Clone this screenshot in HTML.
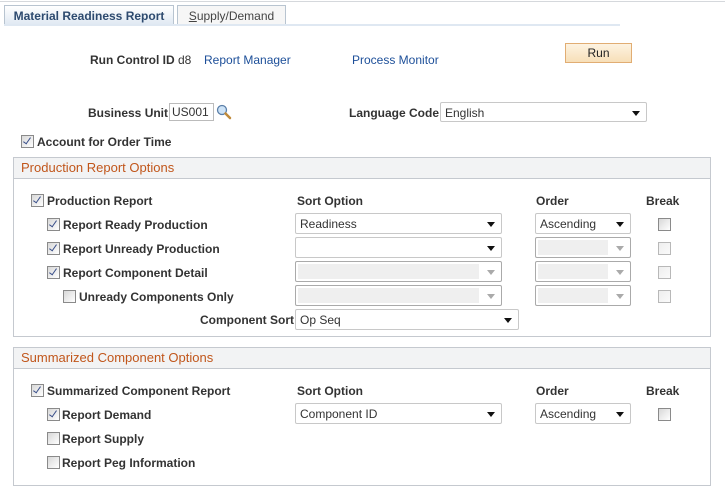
<!DOCTYPE html>
<html><head><style>
body{margin:0;width:725px;height:488px;background:#fff;font-family:"Liberation Sans",Arial,sans-serif;font-size:12px;color:#333;position:relative;overflow:hidden}
.a{position:absolute;white-space:nowrap}
.b{font-weight:bold}
.lk{color:#1d4f99}
.cb{position:absolute;width:11px;height:11px;border:1px solid #8a8a8a;background:linear-gradient(135deg,#d8d8d8,#fff)}
.cb.c::after{content:"";position:absolute;left:3px;top:0px;width:3px;height:7px;border:solid #3a4f8a;border-width:0 1.5px 1.5px 0;transform:rotate(35deg)}
.cb.d{border-color:#b8b8b8;background:linear-gradient(135deg,#eee,#fafafa)}
.sel{position:absolute;height:19px;border:1px solid #c8c8c8;border-radius:2px;background:#fff;box-sizing:border-box;line-height:19px;padding-left:4px;font-size:12px}
.sel::after{content:"";position:absolute;right:6px;top:8px;border:4px solid transparent;border-top:5px solid #111;border-bottom:0}
.sel.dis{border-color:#aaa}
.sel.dis::before{content:"";position:absolute;left:2px;top:2px;bottom:2px;right:22px;background:#efefef}
.sel.dis::after{border-top-color:#aaa}
.box{position:absolute;border:1px solid #c5c9cf;left:13px;width:696px}
.hdr{position:absolute;left:0;right:0;top:0;height:20px;background:#f2f3f4;border-bottom:1px solid #c5c9cf;color:#c1561b;font-size:13px;line-height:20px;padding-left:7px}
</style></head><body>
<div class="a" style="left:0;top:1px;width:725px;height:1px;background:#d5d8dc"></div>
<div class="a" style="left:4px;top:5px;width:170px;height:20px;background:linear-gradient(#fff,#dfe8f2);border:1px solid #b8c4d0;border-bottom:none;box-sizing:border-box;color:#2d4a6f;font-weight:bold;line-height:21px;text-align:center">Material Readiness Report</div>
<div class="a" style="left:177px;top:5px;width:109px;height:20px;background:#f6f6f6;border:1px solid #b8c4d0;border-bottom:none;box-sizing:border-box;line-height:21px;text-align:center;color:#444"><u>S</u>upply/Demand</div>
<div class="a" style="left:4px;top:24px;width:616px;height:2px;background:#dfe8f2"></div>

<div class="a b" style="left:90px;top:53px">Run Control ID</div>
<div class="a" style="left:178px;top:53px">d8</div>
<div class="a lk" style="left:204px;top:53px">Report Manager</div>
<div class="a lk" style="left:352px;top:53px">Process Monitor</div>
<div class="a" style="left:565px;top:43px;width:67px;height:20px;box-sizing:border-box;border:1px solid #e1ad73;background:linear-gradient(#fdf3e1,#f7dfb8);text-align:center;line-height:18px;color:#222">Run</div>

<div class="a b" style="left:88px;top:106px">Business Unit</div>
<div class="a" style="left:169px;top:103px;width:45px;height:18px;box-sizing:border-box;border:1px solid #bbb;line-height:17px;padding-left:2px">US001</div>
<svg class="a" style="left:216px;top:104px" width="16" height="16" viewBox="0 0 16 16"><circle cx="6" cy="6" r="4.5" fill="#cde3f7" stroke="#5b7fa8" stroke-width="1.3"/><path d="M9.5 9.5L14 14" stroke="#c08a3a" stroke-width="2.5" stroke-linecap="round"/></svg>
<div class="a b" style="left:349px;top:106px">Language Code</div>
<div class="sel" style="left:440px;top:102px;width:207px;height:20px;line-height:21px">English</div>

<div class="cb c" style="left:21px;top:135px"></div>
<div class="a b" style="left:37px;top:135px">Account for Order Time</div>

<div class="box" style="top:157px;height:178px"><div class="hdr">Production Report Options</div></div>
<div class="cb c" style="left:31px;top:194px"></div><div class="a b" style="left:47px;top:194px">Production Report</div>
<div class="a b" style="left:297px;top:194px">Sort Option</div>
<div class="a b" style="left:536px;top:194px">Order</div>
<div class="a b" style="left:646px;top:194px">Break</div>

<div class="cb c" style="left:47px;top:218px"></div><div class="a b" style="left:63px;top:218px">Report Ready Production</div>
<div class="sel" style="left:295px;top:213px;width:207px;height:21px;line-height:21px">Readiness</div>
<div class="sel" style="left:535px;top:213px;width:96px;height:21px;line-height:21px">Ascending</div>
<div class="cb" style="left:658px;top:218px"></div>

<div class="cb c" style="left:47px;top:242px"></div><div class="a b" style="left:63px;top:242px">Report Unready Production</div>
<div class="sel" style="left:295px;top:237px;width:207px;height:21px"></div>
<div class="sel dis" style="left:535px;top:237px;width:96px;height:21px"></div>
<div class="cb d" style="left:658px;top:242px"></div>

<div class="cb c" style="left:47px;top:266px"></div><div class="a b" style="left:63px;top:266px">Report Component Detail</div>
<div class="sel dis" style="left:295px;top:261px;width:207px;height:21px"></div>
<div class="sel dis" style="left:535px;top:261px;width:96px;height:21px"></div>
<div class="cb d" style="left:658px;top:266px"></div>

<div class="cb" style="left:63px;top:290px"></div><div class="a b" style="left:79px;top:290px">Unready Components Only</div>
<div class="sel dis" style="left:295px;top:285px;width:207px;height:21px"></div>
<div class="sel dis" style="left:535px;top:285px;width:96px;height:21px"></div>
<div class="cb d" style="left:658px;top:290px"></div>

<div class="a b" style="left:200px;top:313px">Component Sort</div>
<div class="sel" style="left:295px;top:309px;width:224px;height:21px;line-height:21px">Op Seq</div>

<div class="box" style="top:347px;height:137px"><div class="hdr">Summarized Component Options</div></div>
<div class="cb c" style="left:31px;top:384px"></div><div class="a b" style="left:47px;top:384px">Summarized Component Report</div>
<div class="a b" style="left:297px;top:384px">Sort Option</div>
<div class="a b" style="left:536px;top:384px">Order</div>
<div class="a b" style="left:646px;top:384px">Break</div>
<div class="cb c" style="left:47px;top:408px"></div><div class="a b" style="left:62px;top:408px">Report Demand</div>
<div class="sel" style="left:295px;top:403px;width:207px;height:21px;line-height:21px">Component ID</div>
<div class="sel" style="left:535px;top:403px;width:96px;height:21px;line-height:21px">Ascending</div>
<div class="cb" style="left:658px;top:408px"></div>
<div class="cb" style="left:47px;top:432px"></div><div class="a b" style="left:62px;top:432px">Report Supply</div>
<div class="cb" style="left:47px;top:456px"></div><div class="a b" style="left:62px;top:456px">Report Peg Information</div>
</body></html>
